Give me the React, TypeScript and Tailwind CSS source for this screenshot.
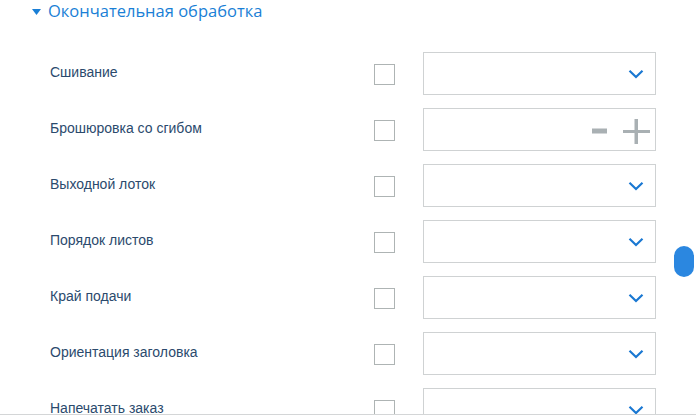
import React from 'react';

const rows = [
  { label: 'Сшивание', kind: 'select' },
  { label: 'Брошюровка со сгибом', kind: 'stepper' },
  { label: 'Выходной лоток', kind: 'select' },
  { label: 'Порядок листов', kind: 'select' },
  { label: 'Край подачи', kind: 'select' },
  { label: 'Ориентация заголовка', kind: 'select' },
  { label: 'Напечатать заказ', kind: 'select' },
];

function Chevron() {
  return (
    <svg width="16" height="10" viewBox="0 0 16 10" className="text-[#1a78d2]">
      <path d="M1.5 1.8 L8 8 L14.5 1.8" fill="none" stroke="currentColor" strokeWidth="2.2" />
    </svg>
  );
}

function Stepper() {
  return (
    <div className="flex items-center gap-4 text-[#a9b0b3]">
      <svg width="15" height="6" viewBox="0 0 15 6">
        <rect x="0" y="0.5" width="15" height="5" fill="currentColor" />
      </svg>
      <svg width="27" height="25" viewBox="0 0 27 25">
        <rect x="0" y="11" width="27" height="3" fill="currentColor" />
        <rect x="11.5" y="0" width="3.5" height="25" fill="currentColor" />
      </svg>
    </div>
  );
}

export default function App() {
  return (
    <div className="relative w-[696px] h-[420px] overflow-hidden bg-white font-['Liberation_Sans',Arial,sans-serif]">
      <div className="h-[414px] overflow-hidden">
        {/* Section header */}
        <div className="flex items-center h-[22px] pl-[32px] text-[#1a7fd6]">
          <svg width="9" height="6" viewBox="0 0 9 6" className="mt-[1px]">
            <path d="M0 0 H9 L4.5 6 Z" fill="currentColor" />
          </svg>
          <span className="ml-[7px] text-[16.5px] font-['Open_Sans',sans-serif] leading-none">
            Окончательная обработка
          </span>
        </div>

        <div className="pt-[30px]">
          {rows.map((row) => (
            <div key={row.label} className="flex items-start h-[56px] pl-[50px]">
              <div className="w-[324px] h-[43px] flex items-center text-[14px] text-[#2b4a6d] pb-[3px]">
                {row.label}
              </div>
              <div className="h-[43px] flex items-center">
                <div className="w-[21px] h-[21px] border border-[#aeb4b4] mt-[1px]" />
              </div>
              <div className="ml-[28px] w-[233px] h-[43px] border border-[#cfd2d3] flex items-center justify-end">
                {row.kind === 'select' ? (
                  <div className="mr-[11px] mt-[1px]">
                    <Chevron />
                  </div>
                ) : (
                  <div className="mr-[5px] mt-[3px]">
                    <Stepper />
                  </div>
                )}
              </div>
            </div>
          ))}
        </div>
      </div>
      <div className="border-t border-[#d4d6d7] h-[6px] bg-white" />

      {/* Scrollbar thumb */}
      <div className="absolute left-[674px] top-[246px] w-[20px] h-[31px] rounded-full bg-[#2b87e0]" />
    </div>
  );
}
